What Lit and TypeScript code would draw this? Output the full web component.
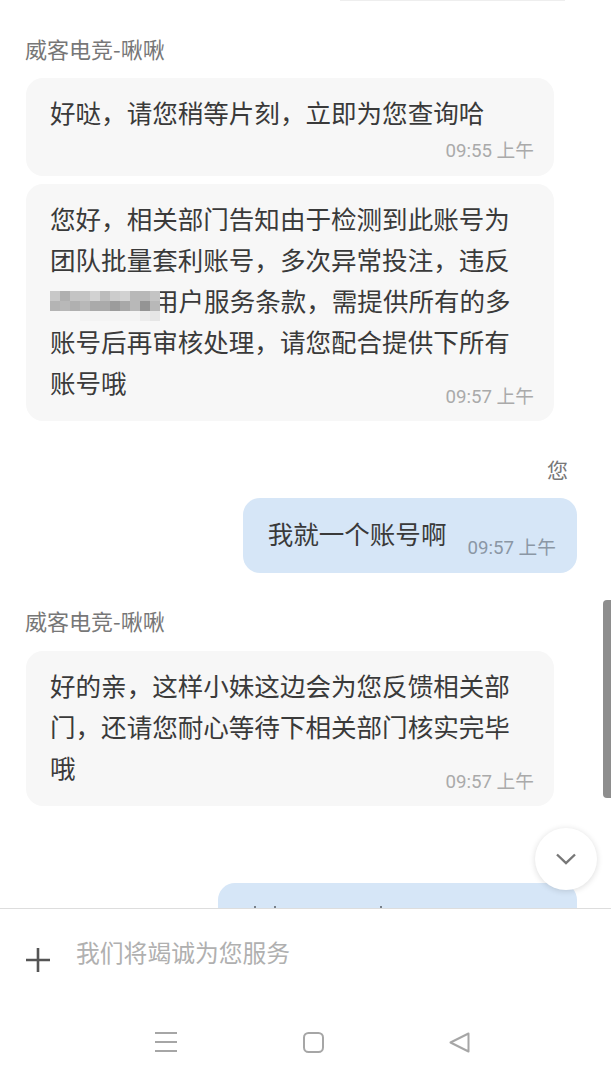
import { LitElement, html, css, svg } from "lit";
import { customElement } from "lit/decorators.js";

// pixelated patch hiding a word in the second message
const MOSAIC = [
  "#c8c8c8", "#b0b0b0", "#c4c4c4", "#c4c4c4", "#d2d2d2", "#bcbcbc", "#cccccc", "#d2d2d2", "#b8b8b8", "#b8b8b8", "#c4c4c4",
  "#b4b4b4", "#b8b8b8", "#b0b0b0", "#b8b8b8", "#aaaaaa", "#aaaaaa", "#9c9c9c", "#a8a8a8", "#b8b8b8", "#949494", "#b8b8b8",
  "#f7f7f7", "#f7f7f7", "#f7f7f7", "#f4f4f4", "#f4f4f4", "#f4f4f4", "#f4f4f4", "#f4f4f4", "#f4f4f4", "#ececec", "#e6e6e6",
];

const plusIcon = svg`<svg class="plus" width="26" height="26" viewBox="0 0 26 26">
  <path d="M13 1v24M1 13h24" stroke="#555" stroke-width="2.6" fill="none"/>
</svg>`;

const chevron = svg`<svg width="22" height="14" viewBox="0 0 22 14">
  <path d="M2 2.5l9 8.5 9-8.5" stroke="#777" stroke-width="2.4" fill="none"/>
</svg>`;

@customElement("app-root")
export class AppRoot extends LitElement {
  static styles = css`
    :host {
      display: block;
      position: relative;
      width: 611px;
      height: 1080px;
      overflow: hidden;
      background: #fff;
      font-family: "Noto Sans CJK SC", "Noto Sans", sans-serif;
    }
    .chat {
      height: 908px;
      overflow: hidden;
      display: flex;
      flex-direction: column;
    }
    .sliver {
      flex: none;
      height: 1px;
      width: 225px;
      margin: 0 46px 33px auto;
      background: #eeeeee;
    }
    .name {
      flex: none;
      height: 28px;
      line-height: 28px;
      font-size: 22px;
      color: #777;
      margin: 0 0 16px 25px;
      white-space: nowrap;
    }
    .name.me {
      align-self: flex-end;
      margin: 26px 43px 15px 0;
      font-size: 21px;
    }
    .name.second {
      margin-top: 33px;
      margin-bottom: 17px;
    }
    .bubble {
      flex: none;
      box-sizing: border-box;
      width: 528px;
      margin: 0 0 8px 26px;
      padding: 13px 20px 12px 24px;
      border-radius: 17px;
      background: #f7f7f7;
    }
    .text {
      display: flow-root;
      width: 464px;
      font-size: 25.55px;
      line-height: 41px;
      color: #3a3a3a;
    }
    .time {
      height: 24px;
      line-height: 24px;
      font-family: Roboto, "Noto Sans CJK SC", sans-serif;
      font-size: 18.7px;
      color: #aaa;
      white-space: nowrap;
    }
    .text .time {
      float: right;
      margin: 24px -20px 0 0;
    }
    .text .time.below {
      margin: 7px -20px 1px 0;
    }
    .mosaic {
      display: inline-block;
      position: relative;
      width: 103px;
      height: 1px;
    }
    .mosaic-cells {
      position: absolute;
      left: 0;
      bottom: -10px;
      display: grid;
      grid-template-columns: repeat(11, 10px);
      grid-auto-rows: 10px;
    }
    .bubble.mine {
      display: flex;
      align-items: flex-start;
      gap: 21px;
      align-self: flex-end;
      width: auto;
      margin: 0 34px 0 0;
      padding: 14px 21px 13px 25px;
      background: #d6e6f7;
    }
    .bubble.mine .text {
      width: auto;
      white-space: nowrap;
    }
    .bubble.mine .time {
      margin-top: 24px;
      color: #8b97a5;
    }
    .bubble.cut {
      display: flex;
      align-self: flex-end;
      width: 359px;
      height: 60px;
      margin: 69px 34px 0 0;
      padding: 23px 0 0 36px;
      background: #d6e6f7;
    }
    .tip {
      width: 2px;
      height: 2px;
      margin-right: 18px;
      background: #77808a;
    }
    .tip.far {
      margin-left: 86px;
    }
    .composer {
      height: 172px;
      box-sizing: border-box;
      border-top: 1px solid #dddddd;
      display: flex;
      flex-direction: column;
    }
    .input-row {
      height: 94px;
      display: flex;
      align-items: flex-start;
      padding: 23px 0 0 25px;
      box-sizing: border-box;
    }
    .plus {
      margin-top: 15px;
      flex: none;
    }
    .placeholder {
      margin-left: 25px;
      font-size: 23.8px;
      line-height: 40px;
      color: #b0b0b0;
    }
    .nav {
      display: flex;
      align-items: center;
      justify-content: space-between;
      padding: 28px 141px 0 155px;
    }
    .scrollbar {
      position: absolute;
      top: 600px;
      right: 0;
      width: 8px;
      height: 198px;
      border-radius: 4px 0 0 4px;
      background: #8e8e8e;
    }
    .fab {
      position: absolute;
      left: 535px;
      top: 828px;
      width: 62px;
      height: 62px;
      border-radius: 50%;
      background: #fff;
      box-shadow: 0 1px 6px rgba(0, 0, 0, 0.14);
      display: flex;
      align-items: center;
      justify-content: center;
    }
  `;

  render() {
    return html`
      <div class="chat">
        <div class="sliver"></div>
        <div class="name">威客电竞-啾啾</div>
        <div class="bubble">
          <div class="text">好哒，请您稍等片刻，立即为您查询哈<span class="time below">09:55 上午</span></div>
        </div>
        <div class="bubble">
          <div class="text">
            您好，相关部门告知由于检测到此账号为团队批量套利账号，多次异常投注，违反<span class="mosaic"
              ><span class="mosaic-cells">${MOSAIC.map((c) => html`<i style="background:${c}"></i>`)}</span></span
            >用户服务条款，需提供所有的多账号后再审核处理，请您配合提供下所有账号哦<span class="time">09:57 上午</span>
          </div>
        </div>
        <div class="name me">您</div>
        <div class="bubble mine">
          <div class="text">我就一个账号啊</div>
          <div class="time">09:57 上午</div>
        </div>
        <div class="name second">威客电竞-啾啾</div>
        <div class="bubble">
          <div class="text">好的亲，这样小妹这边会为您反馈相关部门，还请您耐心等待下相关部门核实完毕哦<span class="time">09:57 上午</span></div>
        </div>
        <div class="bubble cut">
          <span class="tip"></span><span class="tip"></span><span class="tip far"></span>
        </div>
      </div>
      <div class="composer">
        <div class="input-row">
          ${plusIcon}
          <div class="placeholder">我们将竭诚为您服务</div>
        </div>
        <div class="nav">
          <svg width="22" height="22" viewBox="0 0 22 22">
            <path d="M0 2h22M0 11h22M0 20h22" stroke="#a6a6a6" stroke-width="2" fill="none" />
          </svg>
          <svg width="21" height="21" viewBox="0 0 21 21">
            <rect x="1" y="1" width="19" height="19" rx="4.5" stroke="#a6a6a6" stroke-width="2" fill="none" />
          </svg>
          <svg width="21" height="21" viewBox="0 0 21 21">
            <path d="M19.5 1.5L1.5 10.5l18 9z" stroke="#a6a6a6" stroke-width="2" stroke-linejoin="round" fill="none" />
          </svg>
        </div>
      </div>
      <div class="scrollbar"></div>
      <div class="fab">${chevron}</div>
    `;
  }
}
